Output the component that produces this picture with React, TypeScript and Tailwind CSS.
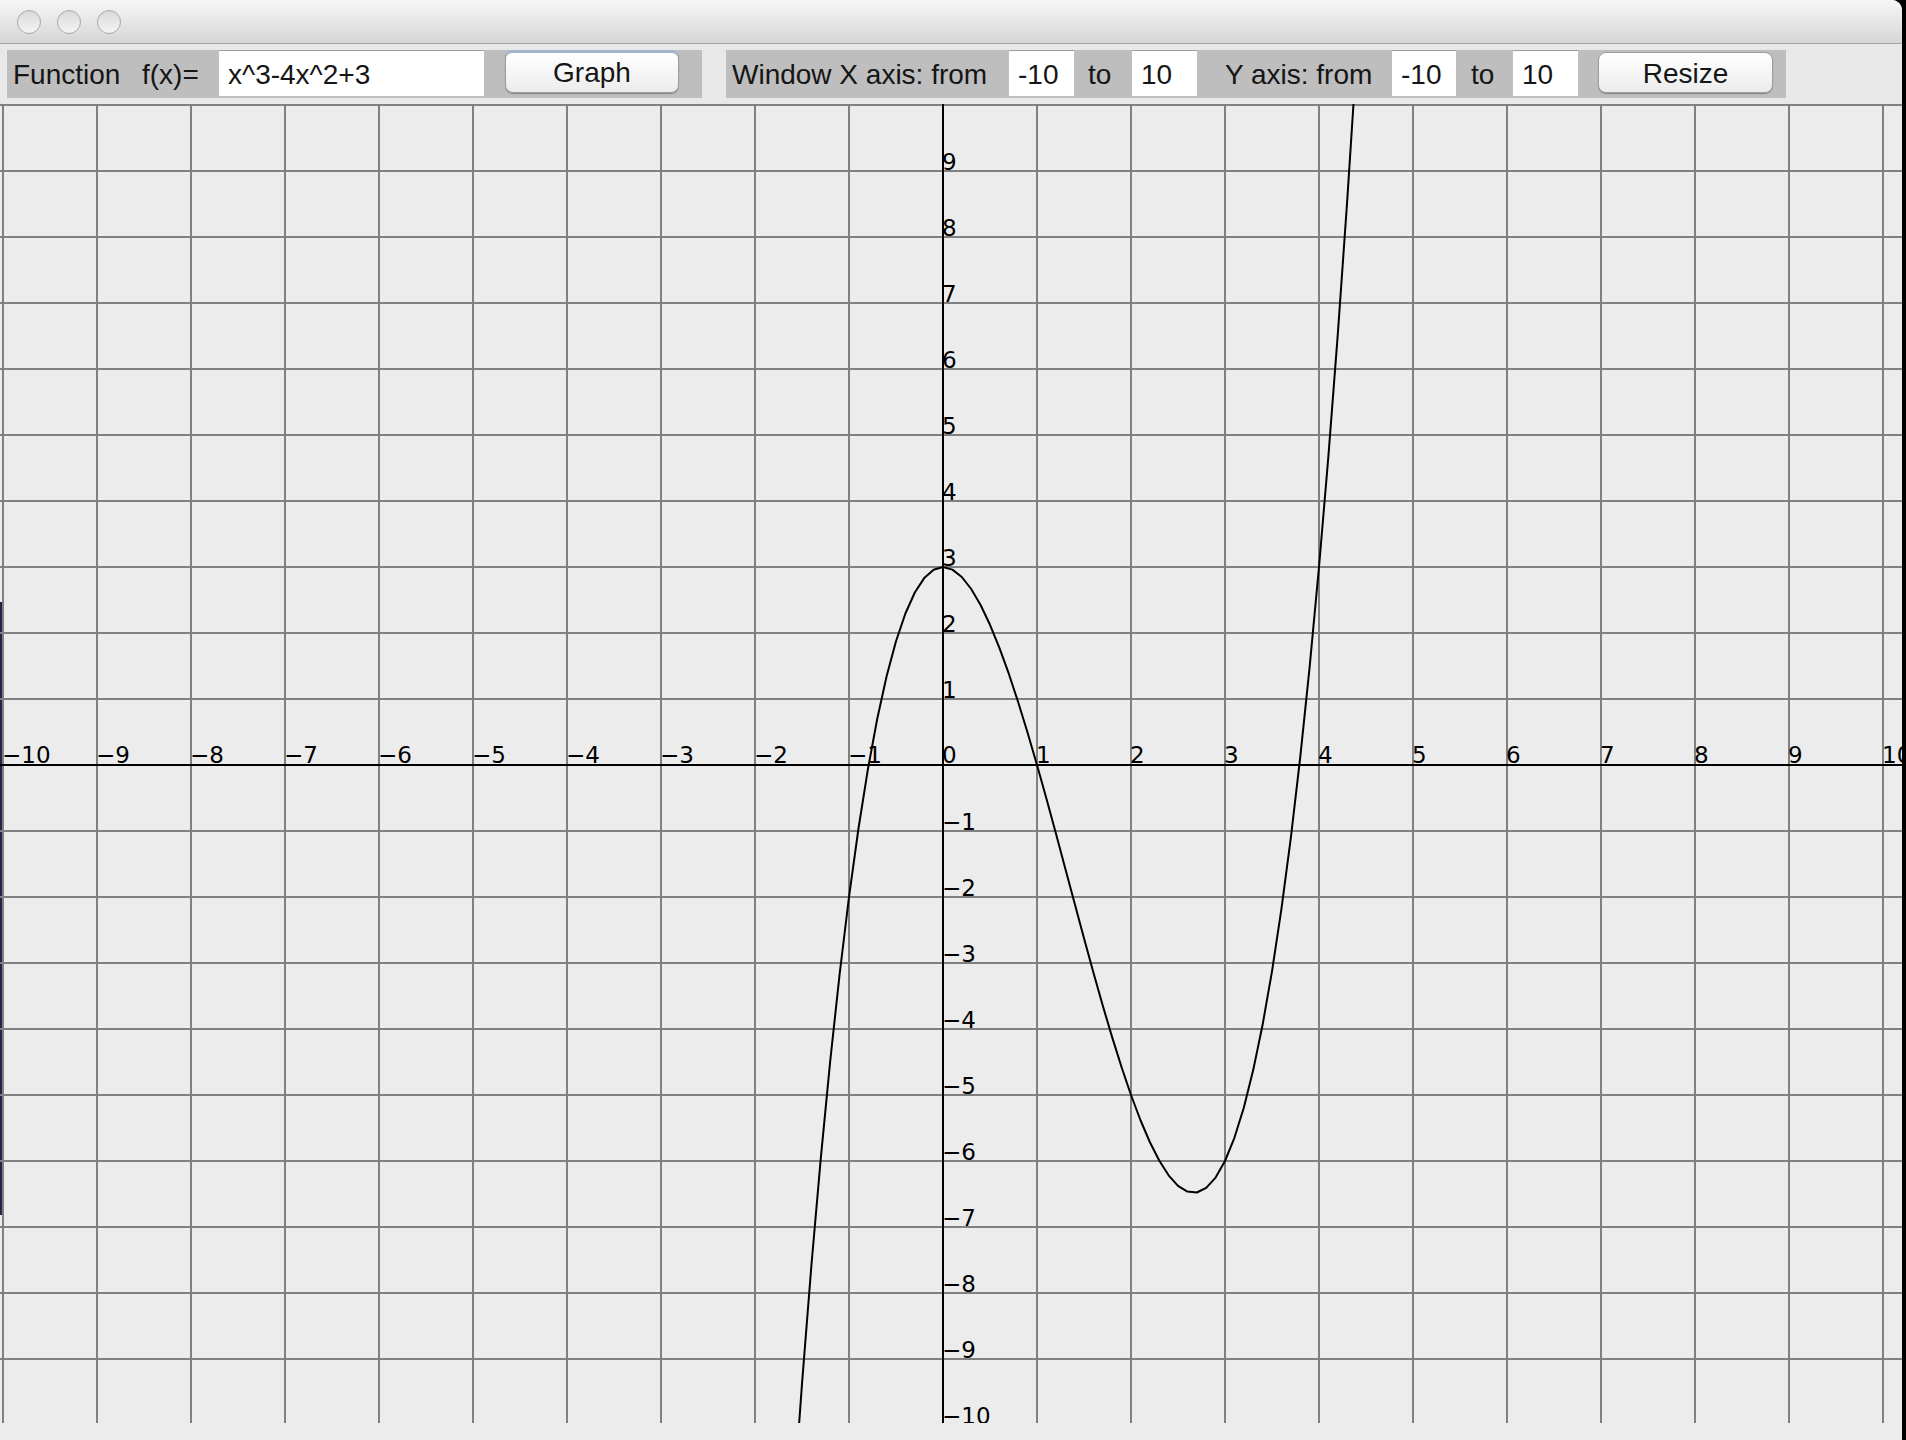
import React from 'react'

// graph window: x and y from -10 to 10
const X0 = 943
const Y0 = 765
const SX = 94
const SY = 66
const TOP = 104
const BOTTOM = 1423
const RIGHT = 1902

const f = (x: number) => x * x * x - 4 * x * x + 3

const ticks = Array.from({ length: 21 }, (_, i) => i - 10)

const label = (n: number) => String(n).replace('-', '\u2212')

function TitleBar() {
  return (
    <div className="flex h-[44px] shrink-0 items-center gap-[16px] border-b border-[#a3a3a3] bg-gradient-to-b from-[#f7f7f7] to-[#d6d6d6] pl-[17px]">
      <div className="h-[24px] w-[24px] rounded-full border border-[#a9a9a9] bg-gradient-to-b from-[#d9d9d9] to-[#f5f5f5]" />
      <div className="h-[24px] w-[24px] rounded-full border border-[#a9a9a9] bg-gradient-to-b from-[#d9d9d9] to-[#f5f5f5]" />
      <div className="h-[24px] w-[24px] rounded-full border border-[#a9a9a9] bg-gradient-to-b from-[#d9d9d9] to-[#f5f5f5]" />
    </div>
  )
}

function Field({ value, w }: { value: string; w: string }) {
  return (
    <div className={`${w} h-[46px] shrink-0 overflow-hidden bg-white pl-[9px] leading-[50px] shadow-[inset_0_1px_0_#9c9c9c]`}>
      {value}
    </div>
  )
}

function Button({ text, primary }: { text: string; primary?: boolean }) {
  return (
    <div
      className={
        primary
          ? 'flex h-[43px] w-[174px] shrink-0 items-center justify-center rounded-[8px] border border-[#9d9d9d] border-t-[3px] border-t-[#a3b6c9] bg-gradient-to-b from-white to-[#ececec] pt-[1px] shadow-[0_1px_1px_rgba(0,0,0,0.3)]'
          : 'mt-[2px] flex h-[41px] w-[175px] shrink-0 items-center justify-center rounded-[8px] border border-[#9d9d9d] bg-gradient-to-b from-white to-[#ececec] pt-[2px] shadow-[0_1px_1px_rgba(0,0,0,0.3)]'
      }
    >
      {text}
    </div>
  )
}

function Toolbar() {
  return (
    <div className="flex h-[60px] shrink-0 items-start gap-[24px] bg-[#e8e8e8] pl-[7px] pt-[6px] font-['Liberation_Sans',Arial,sans-serif] text-[28px] text-[#151515]">
      <div className="flex h-[48px] w-[695px] items-start bg-[#bebebe]">
        <span className="ml-[6px] w-[129px] leading-[50px]">Function</span>
        <span className="w-[77px] leading-[50px]">f(x)=</span>
        <Field value="x^3-4x^2+3" w="w-[265px]" />
        <div className="ml-[21px]">
          <Button text="Graph" primary />
        </div>
      </div>
      <div className="flex h-[48px] w-[1060px] items-start bg-[#bebebe]">
        <span className="ml-[6px] w-[277px] leading-[50px]">Window X axis: from</span>
        <Field value="-10" w="w-[65px]" />
        <span className="ml-[14px] w-[44px] leading-[50px]">to</span>
        <Field value="10" w="w-[65px]" />
        <span className="ml-[28px] w-[167px] leading-[50px]">Y axis: from</span>
        <Field value="-10" w="w-[64px]" />
        <span className="ml-[15px] w-[42px] leading-[50px]">to</span>
        <Field value="10" w="w-[65px]" />
        <div className="ml-[20px]">
          <Button text="Resize" />
        </div>
      </div>
    </div>
  )
}

function GraphCanvas() {
  const pts: string[] = []
  for (let i = -100; i <= 100; i++) {
    const x = i / 10
    pts.push(`${(X0 + x * SX).toFixed(1)},${(Y0 - f(x) * SY).toFixed(1)}`)
  }

  return (
    <svg
      width={RIGHT}
      height={BOTTOM - TOP}
      viewBox={`0 ${TOP} ${RIGHT} ${BOTTOM - TOP}`}
      className="block shrink-0 font-['DejaVu_Sans',sans-serif] text-[23px]"
    >
      <rect x={0} y={TOP} width={RIGHT} height={BOTTOM - TOP} fill="#ececec" />
      <rect x={0} y={602} width={2} height={613} fill="#24244a" />
      <g stroke="#808080" strokeWidth={2} shapeRendering="crispEdges">
        {ticks.map((t) => (
          <line key={'v' + t} x1={X0 + t * SX} y1={TOP} x2={X0 + t * SX} y2={BOTTOM} />
        ))}
        {ticks.map((t) => (
          <line key={'h' + t} x1={0} y1={Y0 - t * SY} x2={RIGHT} y2={Y0 - t * SY} />
        ))}
      </g>
      <g stroke="#000" strokeWidth={2} shapeRendering="crispEdges">
        <line x1={0} y1={Y0} x2={RIGHT} y2={Y0} />
        <line x1={X0} y1={TOP} x2={X0} y2={BOTTOM} />
      </g>
      <g fill="#000">
        {ticks.map((t) => (
          <text key={'xl' + t} x={X0 + t * SX - 1} y={Y0 - 2}>
            {label(t)}
          </text>
        ))}
        {ticks
          .filter((t) => t !== 0 && t !== 10)
          .map((t) => (
            <text key={'yl' + t} x={X0 - 1} y={Y0 - t * SY - 1}>
              {label(t)}
            </text>
          ))}
      </g>
      <polyline points={pts.join(' ')} fill="none" stroke="#000" strokeWidth={2} strokeLinejoin="round" />
    </svg>
  )
}

export default function App() {
  return (
    <div className="flex h-[1440px] w-[1906px] overflow-hidden bg-black">
      <div className="flex h-[1440px] w-[1902px] flex-col overflow-hidden rounded-tr-[10px] bg-[#ececec]">
        <TitleBar />
        <Toolbar />
        <GraphCanvas />
      </div>
    </div>
  )
}
